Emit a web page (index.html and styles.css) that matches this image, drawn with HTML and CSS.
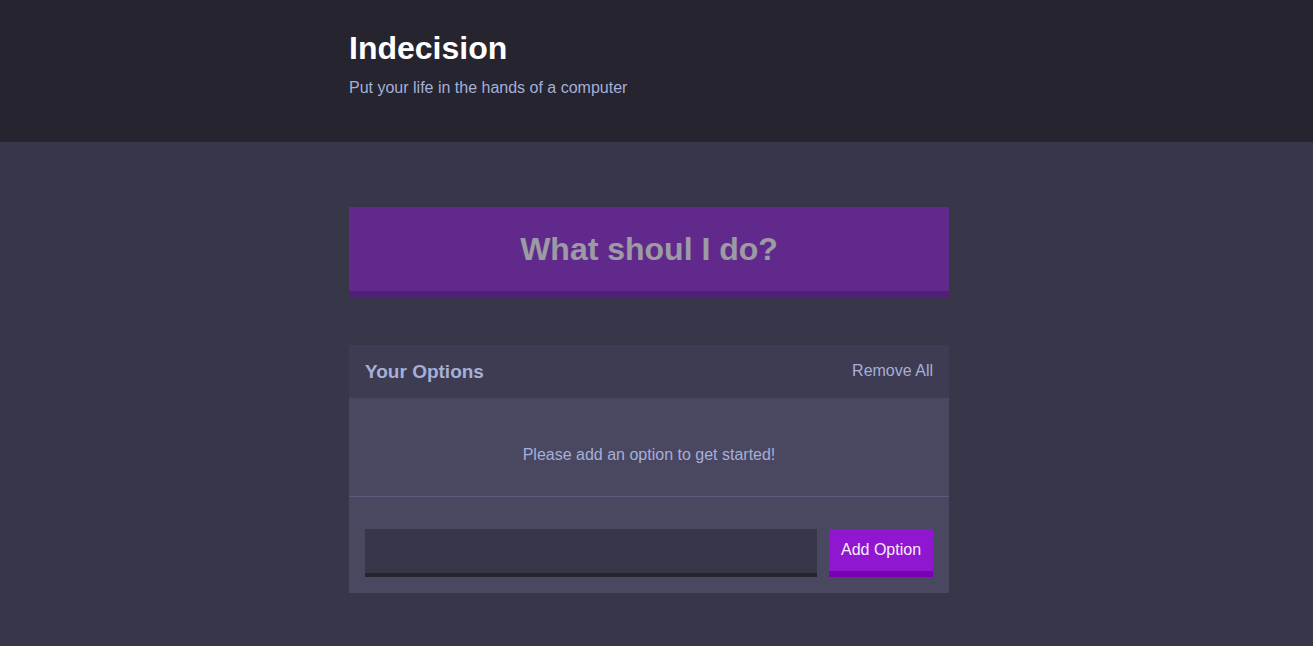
FILE: index.html
```html
<!DOCTYPE html>
<html lang="en">
<head>
<meta charset="utf-8">
<title>Indecision</title>
<link rel="stylesheet" href="styles.css">
</head>
<body>
  <header class="header">
    <div class="container">
      <h1 class="header__title">Indecision</h1>
      <h2 class="header__subtitle">Put your life in the hands of a computer</h2>
    </div>
  </header>
  <main class="container main">
    <button class="big-button" disabled>What shoul I do?</button>
    <section class="widget">
      <div class="widget-header">
        <h3 class="widget-header__title">Your Options</h3>
        <button class="button--link">Remove All</button>
      </div>
      <p class="widget__message">Please add an option to get started!</p>
      <form class="add-option">
        <input class="add-option__input" type="text" name="option">
        <button class="button" type="button">Add Option</button>
      </form>
    </section>
  </main>
</body>
</html>
```
FILE: styles.css
```css
* { box-sizing: border-box; }

html, body {
  margin: 0;
  padding: 0;
}

body {
  background: #383649;
  font-family: "Liberation Sans", Arial, sans-serif;
  font-size: 16px;
  color: #a5afd7;
  min-height: 646px;
}

.container {
  max-width: 615px;
  padding-right: 15px;
  margin: 0 auto;
}

.header {
  background: #26242f;
  padding: 30px 0 45px;
}

.header__title {
  margin: 0;
  font-size: 32px;
  font-weight: bold;
  color: #ffffff;
}

.header__subtitle {
  margin: 12px 0 0;
  font-size: 16px;
  font-weight: normal;
  color: #a5afd7;
}

.main {
  padding-top: 65px;
}

.big-button {
  display: block;
  width: 100%;
  background: #8a1ecd;
  color: #ffffff;
  border: none;
  border-bottom: 6px solid #6c0aa8;
  font-family: inherit;
  font-size: 32px;
  font-weight: bold;
  padding: 24px 0 23px;
  margin: 0 0 48px;
  opacity: 0.5;
}

.widget {
  background: #4a4761;
}

.widget-header {
  background: #3e3c52;
  display: flex;
  align-items: center;
  justify-content: space-between;
  padding: 16px;
}

.widget-header__title {
  margin: 0;
  font-size: 19px;
  line-height: 21px;
  font-weight: bold;
  color: #a5afd7;
}

.button--link {
  background: none;
  border: none;
  padding: 0 0 2px;
  font-family: inherit;
  font-size: 16px;
  color: #a5afd7;
}

.widget__message {
  margin: 0;
  padding: 48px 16px 32px;
  text-align: center;
  color: #a5afd7;
  border-bottom: 1px solid #5e5a7c;
}

.add-option {
  display: flex;
  gap: 12px;
  padding: 32px 16px 16px;
}

.add-option__input {
  flex: 1;
  height: 48px;
  background: #383649;
  border: none;
  border-bottom: 4px solid #26242f;
  color: #a5afd7;
  font-family: inherit;
  font-size: 16px;
  padding: 0 12px;
  outline: none;
}

.button {
  width: 104px;
  height: 48px;
  background: #8f17cf;
  color: #f6eefc;
  border: none;
  border-bottom: 6px solid #7a00b3;
  font-family: inherit;
  font-size: 16px;
  padding: 0;
}
```
